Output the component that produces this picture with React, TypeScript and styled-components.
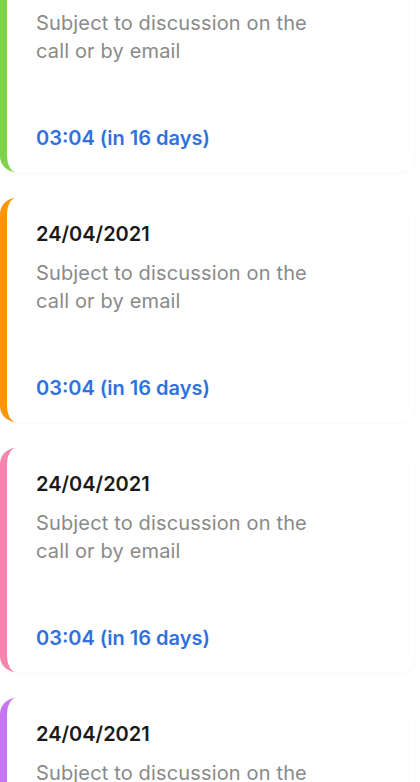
import React from "react";
import styled, { createGlobalStyle } from "styled-components";

const Global = createGlobalStyle`
  html, body { margin: 0; padding: 0; background: #ffffff; }
  body { font-family: Inter, "Noto Sans", sans-serif; overflow: hidden; }
`;

const List = styled.div`
  display: flex;
  flex-direction: column;
  gap: 26px;
  margin-top: -52px;
  padding-right: 5px;
`;

const Card = styled.div<{ $accent: string }>`
  display: flex;
  flex-direction: column;
  height: 224px;
  box-sizing: border-box;
  padding: 23px 20px 21px 29px;
  background: #ffffff;
  border-left: 7px solid ${(p) => p.$accent};
  border-radius: 16px;
  box-shadow: 0 1px 5px rgba(0, 0, 0, 0.03);
`;

const DateText = styled.div`
  font-size: 20px;
  line-height: 26px;
  font-weight: 600;
  color: #1a1a1a;
`;

const Desc = styled.div`
  margin-top: 12px;
  font-size: 20px;
  line-height: 28px;
  letter-spacing: 0.15px;
  color: #8a8a8a;
  max-width: 280px;
`;

const Time = styled.div`
  margin-top: auto;
  font-size: 20px;
  line-height: 26px;
  font-weight: 600;
  color: #2f71df;
`;

const accents = ["#7fd34a", "#ff9500", "#f784ad", "#c675f5"];

export default function App() {
  return (
    <>
      <Global />
      <List>
        {accents.map((a, i) => (
          <Card key={i} $accent={a}>
            <DateText>24/04/2021</DateText>
            <Desc>Subject to discussion on the call or by email</Desc>
            <Time>03:04 (in 16 days)</Time>
          </Card>
        ))}
      </List>
    </>
  );
}
